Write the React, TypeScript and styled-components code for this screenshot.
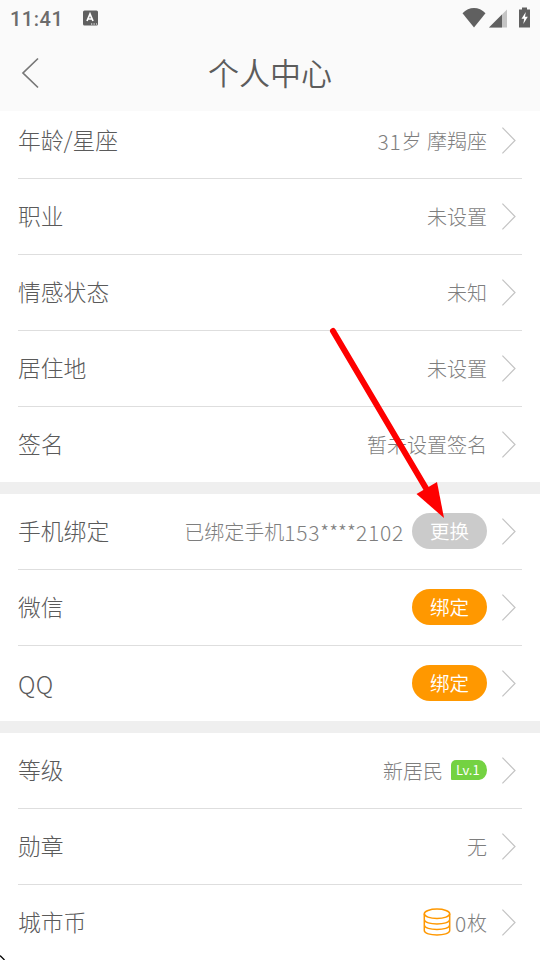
import React from 'react';
import styled, { createGlobalStyle } from 'styled-components';

const GlobalStyle = createGlobalStyle`
  * { box-sizing: border-box; }
  body { margin: 0; background: #fff; }
`;

const Screen = styled.main`
  position: relative;
  width: 540px;
  height: 960px;
  overflow: hidden;
  display: flex;
  flex-direction: column;
  background: #fff;
  font-family: "Noto Sans CJK SC", sans-serif;
  font-weight: 300;
`;

const Header = styled.header`
  position: relative;
  z-index: 1;
  flex: none;
  height: 111px;
  background: #fafafa;
`;

const StatusBar = styled.div`
  display: flex;
  align-items: center;
  height: 36px;
  padding: 0 9px 0 10px;
  svg { display: block; flex: none; }
`;

const Clock = styled.span`
  width: 72px;
  font: 500 20px/36px Roboto, sans-serif;
  letter-spacing: 0.5px;
  color: #6c6c6c;
  padding-top: 2px;
`;

const StatusIcons = styled.div`
  display: flex;
  margin-left: auto;
`;

const NavBar = styled.div`
  display: grid;
  grid-template-columns: 60px 1fr 60px;
  align-items: center;
  height: 73px;
`;

const BackButton = styled.button`
  display: flex;
  padding: 0 0 0 20px;
  border: 0;
  background: none;
`;

const Title = styled.h1`
  margin: 0;
  padding-bottom: 1px;
  text-align: center;
  font-size: 31px;
  line-height: 46px;
  font-weight: 350;
  color: #5c5c5c;
`;

const List = styled.div`
  flex: none;
  margin-top: -8px;
`;

const Section = styled.section`
  & + & { border-top: 12px solid #efefef; }
`;

const RowBox = styled.div<{ $last?: boolean }>`
  display: flex;
  align-items: center;
  height: ${(p) => (p.$last ? 75 : 76)}px;
  margin: 0 18px;
  padding-right: 6px;
  border-bottom: ${(p) => (p.$last ? '0' : '1px solid #dedede')};
`;

const Label = styled.span<{ $latin?: boolean }>`
  margin-bottom: ${(p) => (p.$latin ? 0 : 2)}px;
  font-size: ${(p) => (p.$latin ? 24 : 22.8)}px;
  line-height: 34px;
  letter-spacing: ${(p) => (p.$latin ? '0.4px' : '0')};
  color: #5a5a5a;
`;

const Value = styled.div`
  display: flex;
  align-items: center;
  margin-left: auto;
  margin-right: 14px;
  font-size: 20px;
  line-height: 30px;
  color: #7e7e7e;
  white-space: pre;
`;

const Digits = styled.span`
  font-size: 21px;
  letter-spacing: 0.75px;
`;

const Mask = styled.span`
  letter-spacing: 0.1px;
`;

const Pill = styled.button<{ $muted?: boolean }>`
  width: 75px;
  height: 36px;
  margin: 0 0 2px 8px;
  padding: 0;
  border: 0;
  border-radius: 18px;
  background: ${(p) => (p.$muted ? '#cbcbcb' : '#ff9800')};
  color: #fff;
  font: 350 19.5px/34px "Noto Sans CJK SC", sans-serif;
`;

const LevelBadge = styled.span`
  width: 36px;
  height: 20px;
  margin: 0 0 2px 8px;
  padding-left: 5px;
  border-radius: 5px 8px 8px 1px / 5px 10px 10px 1px;
  background: #74d242;
  color: #fff;
  font: 400 13px/20px "Noto Sans CJK SC", sans-serif;
`;

const ChevronIcon = styled.svg`
  flex: none;
  margin-bottom: 2px;
`;

const CoinsIcon = styled.svg`
  margin: 0 4px 2px 0;
`;

const ArrowOverlay = styled.svg`
  position: absolute;
  left: 320px;
  top: 320px;
  z-index: 2;
  pointer-events: none;
`;

const CursorTip = styled.svg`
  position: absolute;
  left: 0;
  bottom: 0;
`;

const Chevron = () => (
  <ChevronIcon width="15" height="28" viewBox="0 0 15 28" fill="none" stroke="#c4c4c4" strokeWidth="1.2">
    <path d="M1.4 1.6L14 14.5L1.4 27.4" />
  </ChevronIcon>
);

const Coins = () => (
  <CoinsIcon width="28" height="28" viewBox="0 0 28 28" fill="none" stroke="#ff9800" strokeWidth="1.5">
    <ellipse cx="14" cy="5.8" rx="12.7" ry="4.7" />
    <path d="M1.3 5.8V22.5C1.3 28.5 26.7 28.5 26.7 22.5V5.8M1.3 11.5C1.3 17.5 26.7 17.5 26.7 11.5M1.3 17C1.3 23 26.7 23 26.7 17" />
  </CoinsIcon>
);

interface RowProps {
  label: string;
  latin?: boolean;
  last?: boolean;
  children: React.ReactNode;
}

const Row = ({ label, latin, last, children }: RowProps) => (
  <RowBox $last={last}>
    <Label $latin={latin}>{label}</Label>
    <Value>{children}</Value>
    <Chevron />
  </RowBox>
);

export default function App() {
  return (
    <Screen>
      <GlobalStyle />
      <Header>
        <StatusBar>
          <Clock>11:41</Clock>
          <svg width="16" height="16" viewBox="0 0 16 16">
            <rect x="1" y="0.5" width="15" height="15" rx="1.5" fill="#606060" />
            <path d="M5 11L8 4L11 11M6 9H10" fill="none" stroke="#fff" strokeWidth="1.7" />
            <path d="M9 14H10.3M11.5 14H12.8M14 14H15" stroke="#fff" strokeWidth="1.2" />
          </svg>
          <StatusIcons>
            <svg width="69" height="22" viewBox="0 0 69 22">
              <path d="M0.5 6.2C7 -0.8 17 -0.8 23.5 6.2L12 20.5Z" fill="#606060" />
              <path d="M27 20.5L45 2.5V20.5Z" fill="#c4c4c4" />
              <path d="M27 20.5L40 7.5V20.5Z" fill="#606060" />
              <path d="M57 2.5H60V0.5H65V2.5H68V20.5H57Z" fill="#606060" />
              <path d="M63.8 5L59.5 11.8H62.2L61.3 17L65.8 9.8H63Z" fill="#fff" />
            </svg>
          </StatusIcons>
        </StatusBar>
        <NavBar>
          <BackButton aria-label="返回">
            <svg width="20" height="32" viewBox="0 0 20 32" fill="none" stroke="#777" strokeWidth="1.7">
              <path d="M18 1.5L3 16L18 30.5" />
            </svg>
          </BackButton>
          <Title>个人中心</Title>
        </NavBar>
      </Header>
      <List>
        <Section>
          <Row label="年龄/星座"><Digits>31</Digits>岁<Digits> </Digits>摩羯座</Row>
          <Row label="职业">未设置</Row>
          <Row label="情感状态">未知</Row>
          <Row label="居住地">未设置</Row>
          <Row label="签名" last>暂未设置签名</Row>
        </Section>
        <Section>
          <Row label="手机绑定">
            已绑定手机<Digits>153</Digits><Mask>****</Mask><Digits>2102</Digits>
            <Pill $muted>更换</Pill>
          </Row>
          <Row label="微信"><Pill>绑定</Pill></Row>
          <Row label="QQ" latin last><Pill>绑定</Pill></Row>
        </Section>
        <Section>
          <Row label="等级">新居民<LevelBadge>Lv.1</LevelBadge></Row>
          <Row label="勋章">无</Row>
          <Row label="城市币"><Coins /><Digits>0</Digits>枚</Row>
        </Section>
      </List>
      <ArrowOverlay width="130" height="205" viewBox="0 0 130 205">
        <path d="M13 11L107 170" stroke="#fe0000" strokeWidth="6" strokeLinecap="round" />
        <path d="M96.5 174L117 162L124 198Z" fill="#fe0000" />
      </ArrowOverlay>
      <CursorTip width="5" height="5" viewBox="0 0 5 5">
        <path d="M0 0.5L4.5 5" stroke="#000" strokeWidth="1.3" />
      </CursorTip>
    </Screen>
  );
}
